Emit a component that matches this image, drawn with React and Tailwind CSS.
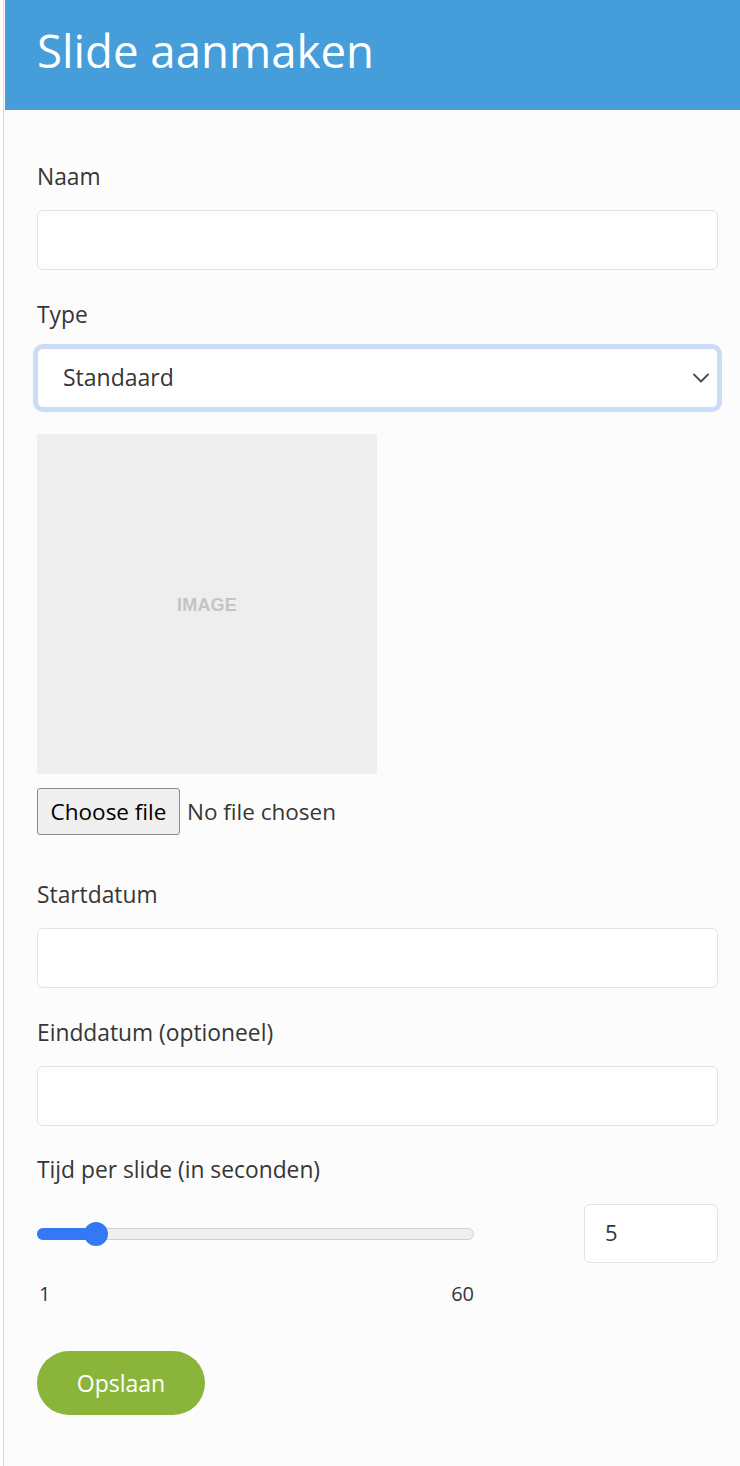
import React, { useState } from "react";

const font = { fontFamily: '"Open Sans", "Noto Sans", sans-serif' };

const Label = ({ children, className = "" }) => (
  <label className={`block text-[22.8px] leading-[28px] text-[#363636] ${className}`}>
    {children}
  </label>
);

const TextInput = ({ className = "" }) => (
  <input
    type="text"
    className={`block w-full h-[60px] rounded-[6px] border border-[#e3e3e3] bg-white px-5 text-[20px] text-[#363636] outline-none ${className}`}
  />
);

export default function App() {
  const [value, setValue] = useState(5);

  return (
    <div className="min-h-screen bg-white pl-[3px]" style={font}>
      <div className="min-h-[1466px] border-l border-[#d9d9d9] bg-[#fcfcfc] pl-px">
        {/* Header */}
        <div className="h-[110px] bg-[#459dd9] pl-8 flex items-center">
          <h1 className="text-[45.6px] leading-none text-white -mt-[8px]">Slide aanmaken</h1>
        </div>

        {/* Form */}
        <div className="pl-8 pr-[22px] pt-[53px] pb-[51px]">
          <Label className="mb-[19px]">Naam</Label>
          <TextInput />

          <Label className="mt-[31px] mb-[19px]">Type</Label>
          <div className="relative h-[60px] rounded-[6px] border border-[#d5dbe5] bg-white shadow-[0_0_0_4px_#c9dcf9] flex items-center pl-[25px] pr-4">
            <span className="text-[23px] text-[#363636] -mt-[2px]">Standaard</span>
            <svg
              className="ml-auto mr-[-9px]"
              width="18"
              height="12"
              viewBox="0 0 18 12"
              fill="none"
              stroke="#4a4a4a"
              strokeWidth="1.8"
              strokeLinecap="round"
              strokeLinejoin="round"
            >
              <path d="M2 2.5l7 7 7-7" />
            </svg>
          </div>

          {/* Image placeholder */}
          <div className="mt-[26px] w-[340px] h-[340px] bg-[#eeeeee] flex items-center justify-center">
            <span
              className="text-[18px] font-bold text-[#c4c4c4] tracking-[0.2px] mt-[2px]"
              style={{ fontFamily: '"Liberation Sans", Arial, sans-serif' }}
            >
              IMAGE
            </span>
          </div>

          {/* File input */}
          <div className="mt-[14px] flex items-center">
            <button className="h-[47px] w-[143px] rounded-[3px] border border-[#8a8a8a] bg-[#efefef] text-[22.5px] text-black">
              Choose file
            </button>
            <span className="ml-[7px] text-[22.5px] text-[#363636]">No file chosen</span>
          </div>

          <Label className="mt-[46px] mb-[19px]">Startdatum</Label>
          <TextInput />

          <Label className="mt-[31px] mb-[19px]">Einddatum (optioneel)</Label>
          <TextInput />

          <Label className="mt-[30px] mb-[20px]">Tijd per slide (in seconden)</Label>
          <div className="flex items-start">
            <div className="w-[437px]">
              <div className="h-[59px] flex items-center">
                <div className="relative w-full h-[12px] rounded-full border border-[#cfcfcf] bg-[#efefef]">
                  <div className="absolute -left-px -top-px h-[12px] w-[60px] rounded-full bg-[#3478f6]" />
                  <div className="absolute left-[46px] top-1/2 -translate-y-1/2 w-[24px] h-[24px] rounded-full bg-[#3478f6]" />
                </div>
              </div>
              <div className="mt-[17px] flex justify-between text-[20px] leading-[28px] text-[#363636]">
                <span className="pl-[2px]">1</span>
                <span>60</span>
              </div>
            </div>
            <input
              type="text"
              value={value}
              onChange={(e) => setValue(e.target.value)}
              className="ml-auto w-[134px] h-[59px] rounded-[6px] border border-[#e3e3e3] bg-white pl-5 pb-[3px] text-[22px] text-[#363636] outline-none"
            />
          </div>

          <button className="mt-[43px] h-[64px] w-[168px] rounded-full bg-[#8ab53a] text-[23px] text-white">
            Opslaan
          </button>
        </div>
      </div>
    </div>
  );
}
